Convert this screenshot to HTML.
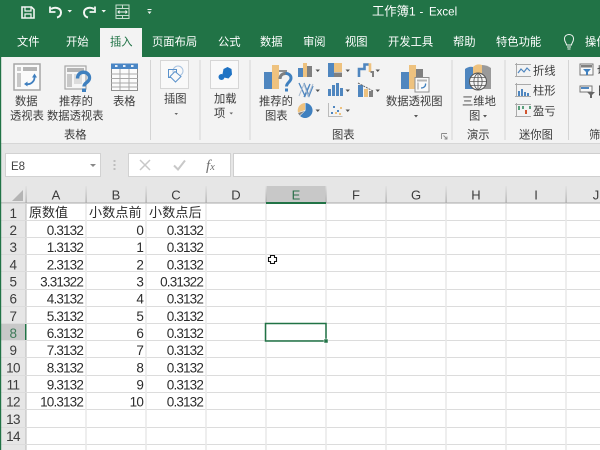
<!DOCTYPE html>
<html lang="zh">
<head>
<meta charset="utf-8">
<title>工作簿1 - Excel</title>
<style>
html,body{margin:0;padding:0;width:600px;height:450px;overflow:hidden;background:#fff}
svg{display:block;font-family:"Liberation Sans","Noto Sans CJK SC",sans-serif;filter:blur(.3px)}
.t{font-size:11.3px;fill:#3c3c3c}
.w{font-size:11.3px;fill:#fff}
.h{font-size:13px;fill:#3c3c3c;text-anchor:middle}
.n{font-size:13.5px;fill:#2c2c2c;text-anchor:end;letter-spacing:-.85px}
.c{font-size:13px;fill:#2c2c2c}
.r{font-size:13.5px;fill:#3c3c3c;text-anchor:middle;letter-spacing:-.6px}
</style>
</head>
<body>
<svg width="600" height="450" viewBox="0 0 600 450" xmlns="http://www.w3.org/2000/svg">
<defs>
<linearGradient id="hs" x1="0" y1="0" x2="0" y2="1"><stop offset="0" stop-color="#e0e0e0"/><stop offset="1" stop-color="#a6a6a6"/></linearGradient>
</defs>
<!-- backgrounds -->
<rect width="600" height="450" fill="#fff"/>
<rect width="600" height="57" fill="#217346"/>
<rect y="57" width="600" height="86" fill="#f3f3f3"/>
<rect y="143" width="600" height="43" fill="#e6e6e6"/>
<rect y="143" width="600" height="1" fill="#d6d6d6"/>
<rect x="100" y="28" width="42" height="30" fill="#f3f3f3"/>

<!-- quick access -->
<g fill="none" stroke="#f2f6f3">
<path d="M22 7H31.500L34 9.500V18H22Z" stroke-width="1.600"/>
<path d="M25 7.500V11H31V7.500M25 18V14H31V18" stroke-width="1.200"/>
<path d="M51 9C55 6.500 61 8 61 12.500C61 15 59.500 17 57 17.500" stroke-width="2"/>
<path d="M50 6.500V12H55.500" stroke-width="1.800"/>
<path d="M94 9C90 6.500 84 8 84 12.500C84 15 85.500 17 88 17.500" stroke-width="2"/>
<path d="M95 6.500V12H89.500" stroke-width="1.800"/>
<rect x="116" y="5" width="13" height="13.500" stroke-width="1" stroke="#c6dccf"/>
<path d="M116 8.500H129M116 15.500H129M122.500 5V8.500M122.500 15.500V18.500" stroke-width="1" stroke="#c6dccf"/>
<path d="M118 12H127M119.500 10.500L118 12L119.500 13.500M125.500 10.500L127 12L125.500 13.500" stroke-width="1"/>
<path d="M147.500 9.500H151.500" stroke-width="1"/>
</g>
<path d="M67.500 10H72L69.750 12.500ZM101.500 10H106L103.750 12.500ZM147.500 11.500H151.500L149.500 14Z" fill="#f2f6f3"/>
<text x="372" y="15.500" font-size="12.300" fill="#fff">工作簿1</text>
<text x="419.500" y="15.500" font-size="11.500" fill="#fff">-</text>
<text x="429" y="15.500" font-size="11.500" fill="#fff">Excel</text>

<!-- tabs -->
<text class="w" x="17" y="45.500">文件</text>
<text class="w" x="66" y="45.500">开始</text>
<text x="110" y="45.500" font-size="11.300" fill="#217346">插入</text>
<text class="w" x="152" y="45.500">页面布局</text>
<text class="w" x="218" y="45.500">公式</text>
<text class="w" x="260" y="45.500">数据</text>
<text class="w" x="303" y="45.500">审阅</text>
<text class="w" x="345" y="45.500">视图</text>
<text class="w" x="388" y="45.500">开发工具</text>
<text class="w" x="453" y="45.500">帮助</text>
<text class="w" x="496" y="45.500">特色功能</text>
<text class="w" x="585" y="45.500">操作</text>
<path d="M566.500 45C566.500 43 564.500 42 564.500 39C564.500 36 566.500 34.500 569 34.500C571.500 34.500 573.500 36 573.500 39C573.500 42 571.500 43 571.500 45ZM567 47H571M567.500 49H570.500" fill="none" stroke="#f2f6f3" stroke-width="1"/>

<!-- separators -->
<g fill="#d4d4d4">
<rect x="150" y="60" width="1" height="80"/>
<rect x="199.500" y="60" width="1" height="80"/>
<rect x="249.500" y="60" width="1" height="80"/>
<rect x="451.500" y="60" width="1" height="80"/>
<rect x="504.500" y="60" width="1" height="80"/>
<rect x="568" y="60" width="1" height="80"/>
</g>

<!-- pivot table -->
<rect x="14" y="64" width="26" height="26" fill="#fafafa" stroke="#a6a6a6" stroke-width="1.500"/>
<rect x="23" y="67" width="14" height="4" fill="#b4b4b4"/>
<rect x="17" y="67" width="4" height="4" fill="#c8c8c8"/>
<rect x="17" y="73" width="4" height="14" fill="#c8c8c8"/>
<path d="M26 84C31 85 35 81 34.500 76.500" fill="none" stroke="#3f7fbf" stroke-width="1.800"/>
<path d="M32 77.500L34.500 73.500L37 77.500ZM27.500 81.500L24 84L27.500 86.500Z" fill="#3f7fbf"/>
<!-- recommended pivot -->
<rect x="65" y="66" width="21" height="23" fill="#f6f6f6" stroke="#a6a6a6" stroke-width="1.200"/>
<rect x="67" y="68" width="17" height="4" fill="#b4b4b4"/>
<rect x="67" y="74" width="5" height="13" fill="#c8c8c8"/>
<rect x="74" y="74" width="8" height="10" fill="#dcdcdc"/>
<path d="M77.500 78.500C77.500 70 89.500 70.500 89.500 78C89.500 82.500 84 82.500 84 86.500" fill="none" stroke="#3f80bf" stroke-width="3.400"/>
<rect x="82" y="88.500" width="4" height="3.500" fill="#3f80bf"/>
<!-- table -->
<rect x="111.500" y="64" width="26" height="26.500" fill="#fbfbfb" stroke="#8f8f8f"/>
<rect x="111" y="63.500" width="27" height="5.500" fill="#4a86c5"/>
<g fill="#e6eef7"><rect x="115" y="65" width="2.500" height="2"/><rect x="123" y="65" width="2.500" height="2"/><rect x="131" y="65" width="2.500" height="2"/></g>
<path d="M111 74H138M111 78.500H138M111 83H138M111 87H138M120 69V90M129 69V90" stroke="#a8a8a8" stroke-width="1"/>
<text class="t" x="15" y="105">数据</text>
<text class="t" x="10" y="119.500">透视表</text>
<text class="t" x="59" y="105">推荐的</text>
<text class="t" x="47" y="119.500">数据透视表</text>
<text class="t" x="113" y="105">表格</text>
<text class="t" x="64" y="138.500">表格</text>

<!-- illustrations -->
<rect x="160.500" y="60.500" width="28" height="28" fill="#f9f9f9" stroke="#d6d6d6"/>
<circle cx="178" cy="71" r="5" fill="#f9f9f9" stroke="#a9c3e0"/>
<rect x="168.500" y="69.500" width="8" height="8" fill="none" stroke="#5b92cb"/>
<path d="M175 71.500L181 76.500L175.500 82L170 76.500Z" fill="#f9f9f9" stroke="#5b92cb"/>
<text class="t" x="164" y="102.500">插图</text>
<path d="M174.500 113H178L176.250 115Z" fill="#666"/>
<!-- addins -->
<rect x="210.500" y="60.500" width="28" height="28" fill="#f9f9f9" stroke="#d6d6d6"/>
<path d="M223.500 69L227.500 67L231.500 69L232 74.500L228.500 78.500L224 77.500L222.500 74Z" fill="#1f73c4"/>
<circle cx="221.500" cy="77" r="3" fill="#1f73c4"/>
<text class="t" x="214" y="102.500">加载</text>
<text class="t" x="214" y="117">项</text>
<path d="M229.500 112.500H233L231.250 114.500Z" fill="#666"/>

<!-- recommended chart -->
<rect x="264" y="72" width="8" height="17" fill="#4f86bf"/>
<rect x="272" y="65" width="7" height="24" fill="#eec27f"/>
<rect x="279" y="70" width="8" height="2" fill="#909090"/>
<path d="M280 79C280 71.500 291 72 291 78C291 82 286.500 82.500 286.500 86.500" fill="none" stroke="#3f80bf" stroke-width="3"/>
<path d="M280 79C280 75 283 73.500 285.500 73.500" fill="none" stroke="#7f7f7f" stroke-width="3"/>
<rect x="285" y="88.500" width="3" height="3" fill="#3f80bf"/>
<text class="t" x="259" y="105">推荐的</text>
<text class="t" x="265" y="119.500">图表</text>

<!-- small charts row 1 -->
<rect x="298" y="68" width="5" height="9" fill="#4f86bf"/>
<rect x="303" y="63" width="4" height="14" fill="#eec27f"/>
<rect x="307" y="66" width="5" height="11" fill="#808080"/>
<rect x="328" y="63" width="6" height="14" fill="#4f86bf"/>
<rect x="334" y="63" width="8" height="9" fill="#eec27f"/>
<rect x="334" y="72.500" width="8" height="4.500" fill="#808080"/>
<path d="M359 77V69H364.500V64.500H369" fill="none" stroke="#4f86bf" stroke-width="2.600"/>
<path d="M368.500 64.500H370V72" fill="none" stroke="#eec27f" stroke-width="2.600"/>
<path d="M370.500 72H373V77" fill="none" stroke="#808080" stroke-width="2"/>
<!-- row 2 -->
<path d="M299 83L305 96L310 84L304 97M304 83L309 96L313 86" fill="none" stroke="#4f86bf" stroke-width="1.300"/>
<path d="M299 96L304 84L308 96L313 84" fill="none" stroke="#aabbd0" stroke-width="1"/>
<g fill="#4f86bf">
<rect x="328" y="89" width="3" height="7"/><rect x="332" y="85" width="3" height="11"/><rect x="336" y="83" width="3" height="13"/><rect x="340" y="88" width="3" height="8"/>
</g>
<rect x="358" y="85" width="5" height="12" fill="#4f86bf"/>
<rect x="364" y="89" width="4" height="8" fill="#eec27f"/>
<rect x="369" y="91" width="4" height="6" fill="#808080"/>
<path d="M358 83L373 91" stroke="#666" stroke-dasharray="2 1" fill="none"/>
<!-- row 3 -->
<path d="M305.500 110.500V103A7.500 7.500 0 1 1 300 116Z" fill="#3f80bf"/>
<path d="M298 112.500A7.500 7.500 0 0 1 305 103V110Z" fill="#eec27f"/>
<path d="M298 113L304.500 111L299.500 115.500Z" fill="#808080"/>
<path d="M328.500 103V116.500H342.500" fill="none" stroke="#bbb"/>
<g fill="#4f86bf"><rect x="333" y="106" width="2" height="2"/><rect x="337" y="110" width="2" height="2"/><rect x="331" y="112" width="2" height="2"/></g>
<g fill="#eec27f"><rect x="335" y="112" width="2" height="2"/><rect x="339" y="113" width="2" height="2"/><rect x="340" y="107" width="2" height="2"/></g>
<path d="M315.500 69.500H320L317.750 72ZM345.500 69.500H350L347.750 72ZM375.500 69.500H380L377.750 72ZM315.500 89.500H320L317.750 92ZM345.500 89.500H350L347.750 92ZM375.500 89.500H380L377.750 92ZM315.500 109.500H320L317.750 112ZM345.500 109.500H350L347.750 112Z" fill="#555"/>

<!-- pivot chart -->
<rect x="401" y="72" width="8" height="17" fill="#4f86bf"/>
<rect x="409" y="65" width="7" height="24" fill="#eec27f"/>
<rect x="416" y="69" width="7" height="9" fill="#808080"/>
<rect x="415" y="77.500" width="14" height="14.500" fill="#fafafa" stroke="#909090"/>
<rect x="417" y="79.500" width="10" height="2" fill="#b4b4b4"/>
<rect x="417" y="82.500" width="2" height="7" fill="#c8c8c8"/>
<path d="M421 88C424 88 426 86 425.500 83.500" fill="none" stroke="#3f80bf" stroke-width="1.300"/>
<text class="t" x="386" y="105">数据透视图</text>
<path d="M414 115H418L416 117.500Z" fill="#555"/>
<text class="t" x="332" y="138.500">图表</text>
<path d="M441.500 133.500H447M441.500 133.500V139M443.500 135.500L447 139M447 136.500V139H444.500" fill="none" stroke="#8a8a8a" stroke-width=".9"/>

<!-- 3d map -->
<path d="M465 69Q469 66 473 67V89H465Z" fill="#4f86bf"/>
<path d="M473 67Q477 63 482 65V89H473Z" fill="#eec27f"/>
<path d="M482 65Q487 65 491 68V89H482Z" fill="#9a9a9a"/>
<circle cx="478" cy="81.500" r="8.500" fill="#f4f4f4" stroke="#555" stroke-width="1"/>
<path d="M469.500 81.500H486.500M470.500 77.500H485.500M470.500 85.500H485.500M478 73V90M478 73C472.500 77 472.500 86 478 90M478 73C483.500 77 483.500 86 478 90" fill="none" stroke="#555" stroke-width=".8"/>
<text class="t" x="462" y="105">三维地</text>
<text class="t" x="469" y="119.500">图</text>
<path d="M483 115H487L485 117.500Z" fill="#555"/>
<text class="t" x="467" y="138.500">演示</text>

<!-- sparklines -->
<g fill="none" stroke="#aaa" stroke-width="1">
<path d="M516.500 63V77M515 76.500H531M515 64.500H531"/>
<path d="M516.500 83V97M515 96.500H531M515 84.500H531"/>
<path d="M516.500 103V117M515 116.500H531M515 104.500H531"/>
</g>
<path d="M518 73L521 69L524 72L527 68L530 71" fill="none" stroke="#4f86bf" stroke-width="1.200"/>
<g fill="#4f86bf"><rect x="518" y="91" width="2" height="5"/><rect x="521" y="89" width="2" height="7"/><rect x="524" y="92" width="2" height="4"/><rect x="527" y="93" width="2" height="3"/></g>
<g fill="#5aa07c"><rect x="518" y="106" width="2" height="4"/><rect x="522" y="106" width="2" height="3"/><rect x="529" y="106" width="2" height="3"/></g>
<rect x="525" y="110" width="2" height="4" fill="#d2552f"/>
<text class="t" x="533" y="74.500">折线</text>
<text class="t" x="533" y="94.500">柱形</text>
<text class="t" x="533" y="115">盈亏</text>
<text class="t" x="519" y="138.500">迷你图</text>

<!-- filters -->
<rect x="580" y="64" width="13" height="11" fill="#f8f8f8" stroke="#777"/>
<rect x="581" y="65" width="11" height="2.500" fill="#808080"/>
<path d="M583 69H591L588 72V75H586V72Z" fill="#3f80bf"/>
<text class="t" x="597" y="74.500">切片</text>
<rect x="580" y="86" width="12" height="6" fill="#f8f8f8" stroke="#777"/>
<rect x="581" y="87" width="8" height="2" fill="#4f86bf"/>
<path d="M587 92H595L592 95V98H590V95Z" fill="#666"/>
<text class="t" x="597" y="94.500">日程</text>
<text class="t" x="589" y="138.500">筛选</text>

<!-- formula bar -->
<rect x="5.500" y="153.500" width="95" height="23" fill="#fff" stroke="#d2d2d2"/>
<text x="11" y="170" font-size="11.500" fill="#444">E8</text>
<path d="M90 164H96L93 167Z" fill="#888"/>
<g fill="#bdbdbd"><rect x="113.500" y="160" width="2" height="2"/><rect x="113.500" y="164" width="2" height="2"/><rect x="113.500" y="168" width="2" height="2"/></g>
<rect x="128.500" y="153.500" width="102" height="23" fill="#fff" stroke="#d2d2d2"/>
<rect x="233.500" y="153.500" width="368" height="23" fill="#fff" stroke="#cfcfcf"/>
<path d="M140 160L150 170M150 160L140 170" stroke="#c8c8c8" stroke-width="1.500" fill="none"/>
<path d="M174 165.500L178 169.500L185 160.500" stroke="#c8c8c8" stroke-width="2" fill="none"/>
<text x="206" y="170" font-size="15" font-family="Liberation Serif" font-style="italic" fill="#707070">f<tspan font-size="10.500">x</tspan></text>

<!-- column header -->
<rect y="186" width="600" height="17" fill="#e6e6e6"/>
<rect x="266" y="186" width="60" height="17" fill="#c8c8c8"/>
<path d="M12 201H23V190Z" fill="#b4b4b4"/>
<g fill="url(#hs)">
<rect x="25.500" y="186" width="1.200" height="17"/><rect x="85.500" y="186" width="1.200" height="17"/><rect x="145.500" y="186" width="1.200" height="17"/><rect x="205.500" y="186" width="1.200" height="17"/><rect x="265.500" y="186" width="1.200" height="17"/><rect x="325.500" y="186" width="1.200" height="17"/><rect x="385.500" y="186" width="1.200" height="17"/><rect x="445.500" y="186" width="1.200" height="17"/><rect x="505.500" y="186" width="1.200" height="17"/><rect x="565.500" y="186" width="1.200" height="17"/>
</g>
<rect y="202.500" width="600" height="1" fill="#a8a8a8"/>
<rect x="266" y="202" width="60" height="2" fill="#217346"/>
<text class="h" x="56" y="199.500">A</text><text class="h" x="116" y="199.500">B</text><text class="h" x="176" y="199.500">C</text><text class="h" x="236" y="199.500">D</text>
<text class="h" x="296" y="199.500" style="fill:#2a6f4a">E</text><text class="h" x="356" y="199.500">F</text><text class="h" x="416" y="199.500">G</text><text class="h" x="476" y="199.500">H</text><text class="h" x="536" y="199.500">I</text><text class="h" x="596" y="199.500">J</text>

<!-- row header -->
<rect y="204" width="26" height="246" fill="#e6e6e6"/>
<rect y="324" width="25" height="17" fill="#c8c8c8"/>
<rect x="25.500" y="204" width="1" height="246" fill="#b9b9b9"/>
<rect x="25" y="323.500" width="1.500" height="17.500" fill="#217346"/>

<!-- grid -->
<g stroke="#dcdcdc" stroke-width="1">
<path d="M0 220.500H600M0 237.500H600M0 254.500H600M0 271.500H600M0 289.500H600M0 306.500H600M0 323.500H600M0 340.500H600M0 357.500H600M0 375.500H600M0 392.500H600M0 409.500H600M0 427.500H600M0 444.500H600"/>
</g>
<g stroke="#e8e8e8" stroke-width="1.500">
<path d="M86 204V450M146 204V450M206 204V450M266 204V450M326 204V450M386 204V450M446 204V450M506 204V450M566 204V450"/>
</g>

<!-- row numbers -->
<text class="r" x="13" y="218">1</text><text class="r" x="13" y="235">2</text><text class="r" x="13" y="252">3</text><text class="r" x="13" y="269.500">4</text><text class="r" x="13" y="286.500">5</text><text class="r" x="13" y="303.500">6</text><text class="r" x="13" y="321">7</text><text class="r" x="13" y="338" style="fill:#3f7a59">8</text><text class="r" x="13" y="355">9</text><text class="r" x="13" y="372.500">10</text><text class="r" x="13" y="389.500">11</text><text class="r" x="13" y="406.500">12</text><text class="r" x="13" y="424">13</text><text class="r" x="13" y="441">14</text>

<!-- data -->
<text class="c" x="29" y="217">原数值</text>
<text class="c" x="89" y="217" letter-spacing=".2">小数点前</text>
<text class="c" x="149" y="217" letter-spacing=".2">小数点后</text>

<text class="n" x="83" y="235">0.3132</text><text class="n" x="143" y="235">0</text><text class="n" x="203" y="235">0.3132</text>
<text class="n" x="83" y="252">1.3132</text><text class="n" x="143" y="252">1</text><text class="n" x="203" y="252">0.3132</text>
<text class="n" x="83" y="269.500">2.3132</text><text class="n" x="143" y="269.500">2</text><text class="n" x="203" y="269.500">0.3132</text>
<text class="n" x="83" y="286.500">3.31322</text><text class="n" x="143" y="286.500">3</text><text class="n" x="203" y="286.500">0.31322</text>
<text class="n" x="83" y="303.500">4.3132</text><text class="n" x="143" y="303.500">4</text><text class="n" x="203" y="303.500">0.3132</text>
<text class="n" x="83" y="321">5.3132</text><text class="n" x="143" y="321">5</text><text class="n" x="203" y="321">0.3132</text>
<text class="n" x="83" y="338">6.3132</text><text class="n" x="143" y="338">6</text><text class="n" x="203" y="338">0.3132</text>
<text class="n" x="83" y="355">7.3132</text><text class="n" x="143" y="355">7</text><text class="n" x="203" y="355">0.3132</text>
<text class="n" x="83" y="372.500">8.3132</text><text class="n" x="143" y="372.500">8</text><text class="n" x="203" y="372.500">0.3132</text>
<text class="n" x="83" y="389.500">9.3132</text><text class="n" x="143" y="389.500">9</text><text class="n" x="203" y="389.500">0.3132</text>
<text class="n" x="83" y="406.500">10.3132</text><text class="n" x="143" y="406.500">10</text><text class="n" x="203" y="406.500">0.3132</text>

<!-- selection -->
<rect x="265.500" y="323.500" width="60.500" height="17.500" fill="none" stroke="#217346" stroke-width="1.500"/>
<rect x="324" y="339" width="4" height="4" fill="#217346" stroke="#fff" stroke-width=".5"/>

<!-- cursor -->
<path d="M270.500 255.500H274.500V257.500H276.500V261.500H274.500V263.500H270.500V261.500H268.500V257.500H270.500Z" fill="#fff" stroke="#111" stroke-width="1.100"/>

<!-- left edge -->
<rect x="0" y="57" width="1.200" height="393" fill="#217346"/>
</svg>
</body>
</html>
